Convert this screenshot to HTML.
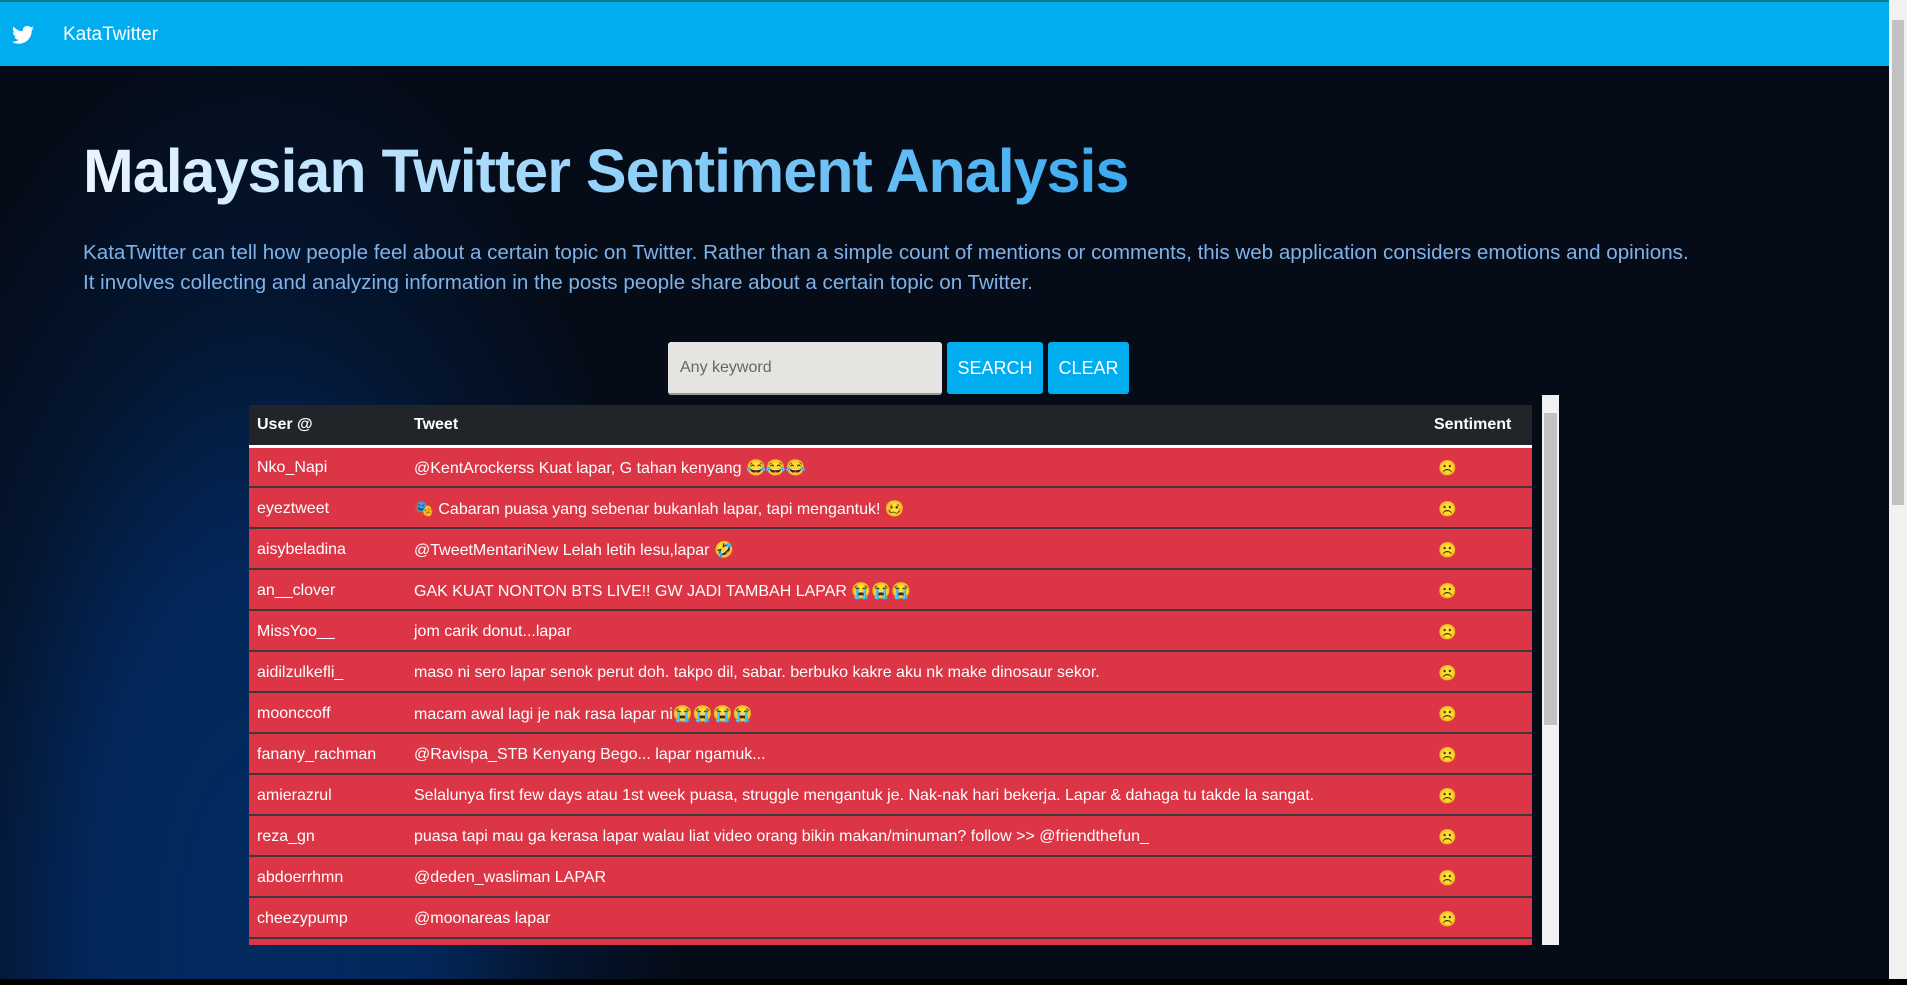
<!DOCTYPE html>
<html><head><meta charset="utf-8">
<style>
*{box-sizing:border-box;margin:0;padding:0}
html,body{width:1907px;height:985px;overflow:hidden;background:#000}
body{font-family:"Liberation Sans",sans-serif;position:relative}
.nav{position:absolute;left:0;top:0;width:1889px;height:66px;background:#00adee;border-top:2px solid #0f7a8f}
.nav svg{position:absolute;left:12px;top:23px}
.nav .brand{position:absolute;left:63px;top:22px;color:#fff;font-size:19px}
.main{position:absolute;left:0;top:66px;width:1889px;height:913px;background:
radial-gradient(ellipse 420px 900px at 260px 860px,#022b60 0%,#03275a 40%,rgba(3,30,70,.5) 70%,rgba(5,12,24,0) 100%),#050c18}
h1{position:absolute;left:83px;top:70px;font-size:61px;font-weight:bold;letter-spacing:-1px;
background:linear-gradient(90deg,#eaf5ff 0%,#9fd6fb 45%,#3aaaf0 100%);-webkit-background-clip:text;background-clip:text;color:transparent;white-space:nowrap}
p.lead{position:absolute;left:83px;top:172px;color:#7fb2e8;font-size:20.6px;line-height:30px;width:1780px}
.inp{position:absolute;left:668px;top:276px;width:274px;height:53px;background:#e6e4e1;border-radius:3px;border-bottom:2px solid #999;color:#666;font-size:16px;padding:17px 12px}
.btn{position:absolute;top:276px;height:52px;background:#00adee;color:#fff;font-size:18px;border-radius:3px;text-align:center;line-height:52px}
.tw{position:absolute;left:249px;top:339px;width:1283px;height:540px;overflow:hidden}
table{border-collapse:collapse;width:1283px;font-size:16px;color:#fff}
th{background:#212529;height:41px;text-align:left;font-weight:bold;border-bottom:3px solid #fff;padding-left:8px}
td{background:#dc3545;height:41px;border-bottom:2px solid #3a3a3a;padding-left:8px;white-space:nowrap;padding-top:2px}
td.s{font-size:15px}
.sb{position:absolute;left:1542px;top:395px;width:17px;height:550px;background:#f1f1f1}
.sb .t{position:absolute;left:2px;top:18px;width:13px;height:312px;background:#c1c1c1}
.psb{position:absolute;left:1889px;top:0;width:18px;height:979px;background:#f1f1f1}
.psb .t{position:absolute;left:3px;top:20px;width:12px;height:485px;background:#c1c1c1}
.bot{position:absolute;left:0;top:979px;width:1907px;height:6px;background:#000}
</style></head><body>
<div class="nav">
<svg width="22" height="20" viewBox="0 0 24 20"><path fill="#fff" d="M24 2.4c-.9.4-1.8.7-2.8.8 1-.6 1.8-1.6 2.2-2.7-1 .6-2 1-3.1 1.2C19.3.7 18 0 16.6 0c-2.7 0-4.900 2.2-4.900 4.900 0 .4 0 .8.1 1.1C7.7 5.8 4.1 3.9 1.700.9c-.4.7-.7 1.6-.7 2.5 0 1.7.9 3.2 2.2 4.1-.8 0-1.6-.2-2.2-.6v.1c0 2.4 1.7 4.4 3.900 4.8-.4.1-.8.2-1.3.2-.3 0-.6 0-.9-.1.6 2 2.4 3.4 4.6 3.4-1.7 1.3-3.8 2.1-6.1 2.1-.4 0-.8 0-1.2-.1 2.2 1.4 4.8 2.2 7.5 2.2 9.1 0 14-7.5 14-14v-.6c1-.7 1.8-1.600 2.5-2.5z"/></svg>
<span class="brand">KataTwitter</span>
</div>
<div class="main">
<h1>Malaysian Twitter Sentiment Analysis</h1>
<p class="lead">KataTwitter can tell how people feel about a certain topic on Twitter. Rather than a simple count of mentions or comments, this web application considers emotions and opinions.<br>It involves collecting and analyzing information in the posts people share about a certain topic on Twitter.</p>
<div class="inp">Any keyword</div>
<div class="btn" style="left:947px;width:96px">SEARCH</div>
<div class="btn" style="left:1048px;width:81px">CLEAR</div>
<div class="tw"><table>
<tr><th style="width:157px">User @</th><th>Tweet</th><th style="width:106px">Sentiment</th></tr>
<tr><td>Nko_Napi</td><td>@KentArockerss Kuat lapar, G tahan kenyang 😂😂😂</td><td class="s">&nbsp;☹️</td></tr>
<tr><td>eyeztweet</td><td>🎭 Cabaran puasa yang sebenar bukanlah lapar, tapi mengantuk! 🥴</td><td class="s">&nbsp;☹️</td></tr>
<tr><td>aisybeladina</td><td>@TweetMentariNew Lelah letih lesu,lapar 🤣</td><td class="s">&nbsp;☹️</td></tr>
<tr><td>an__clover</td><td>GAK KUAT NONTON BTS LIVE!! GW JADI TAMBAH LAPAR 😭😭😭</td><td class="s">&nbsp;☹️</td></tr>
<tr><td>MissYoo__</td><td>jom carik donut...lapar</td><td class="s">&nbsp;☹️</td></tr>
<tr><td>aidilzulkefli_</td><td>maso ni sero lapar senok perut doh. takpo dil, sabar. berbuko kakre aku nk make dinosaur sekor.</td><td class="s">&nbsp;☹️</td></tr>
<tr><td>moonccoff</td><td>macam awal lagi je nak rasa lapar ni😭😭😭😭</td><td class="s">&nbsp;☹️</td></tr>
<tr><td>fanany_rachman</td><td>@Ravispa_STB Kenyang Bego... lapar ngamuk...</td><td class="s">&nbsp;☹️</td></tr>
<tr><td>amierazrul</td><td>Selalunya first few days atau 1st week puasa, struggle mengantuk je. Nak-nak hari bekerja. Lapar &amp; dahaga tu takde la sangat.</td><td class="s">&nbsp;☹️</td></tr>
<tr><td>reza_gn</td><td>puasa tapi mau ga kerasa lapar walau liat video orang bikin makan/minuman? follow &gt;&gt; @friendthefun_</td><td class="s">&nbsp;☹️</td></tr>
<tr><td>abdoerrhmn</td><td>@deden_wasliman LAPAR</td><td class="s">&nbsp;☹️</td></tr>
<tr><td>cheezypump</td><td>@moonareas lapar</td><td class="s">&nbsp;☹️</td></tr>
<tr><td>user</td><td>lapar</td><td class="s">&nbsp;☹️</td></tr>
</table></div>
</div>
<div class="sb"><div class="t"></div></div>
<div class="psb"><div class="t"></div></div>
<div class="bot"></div>
</body></html>
